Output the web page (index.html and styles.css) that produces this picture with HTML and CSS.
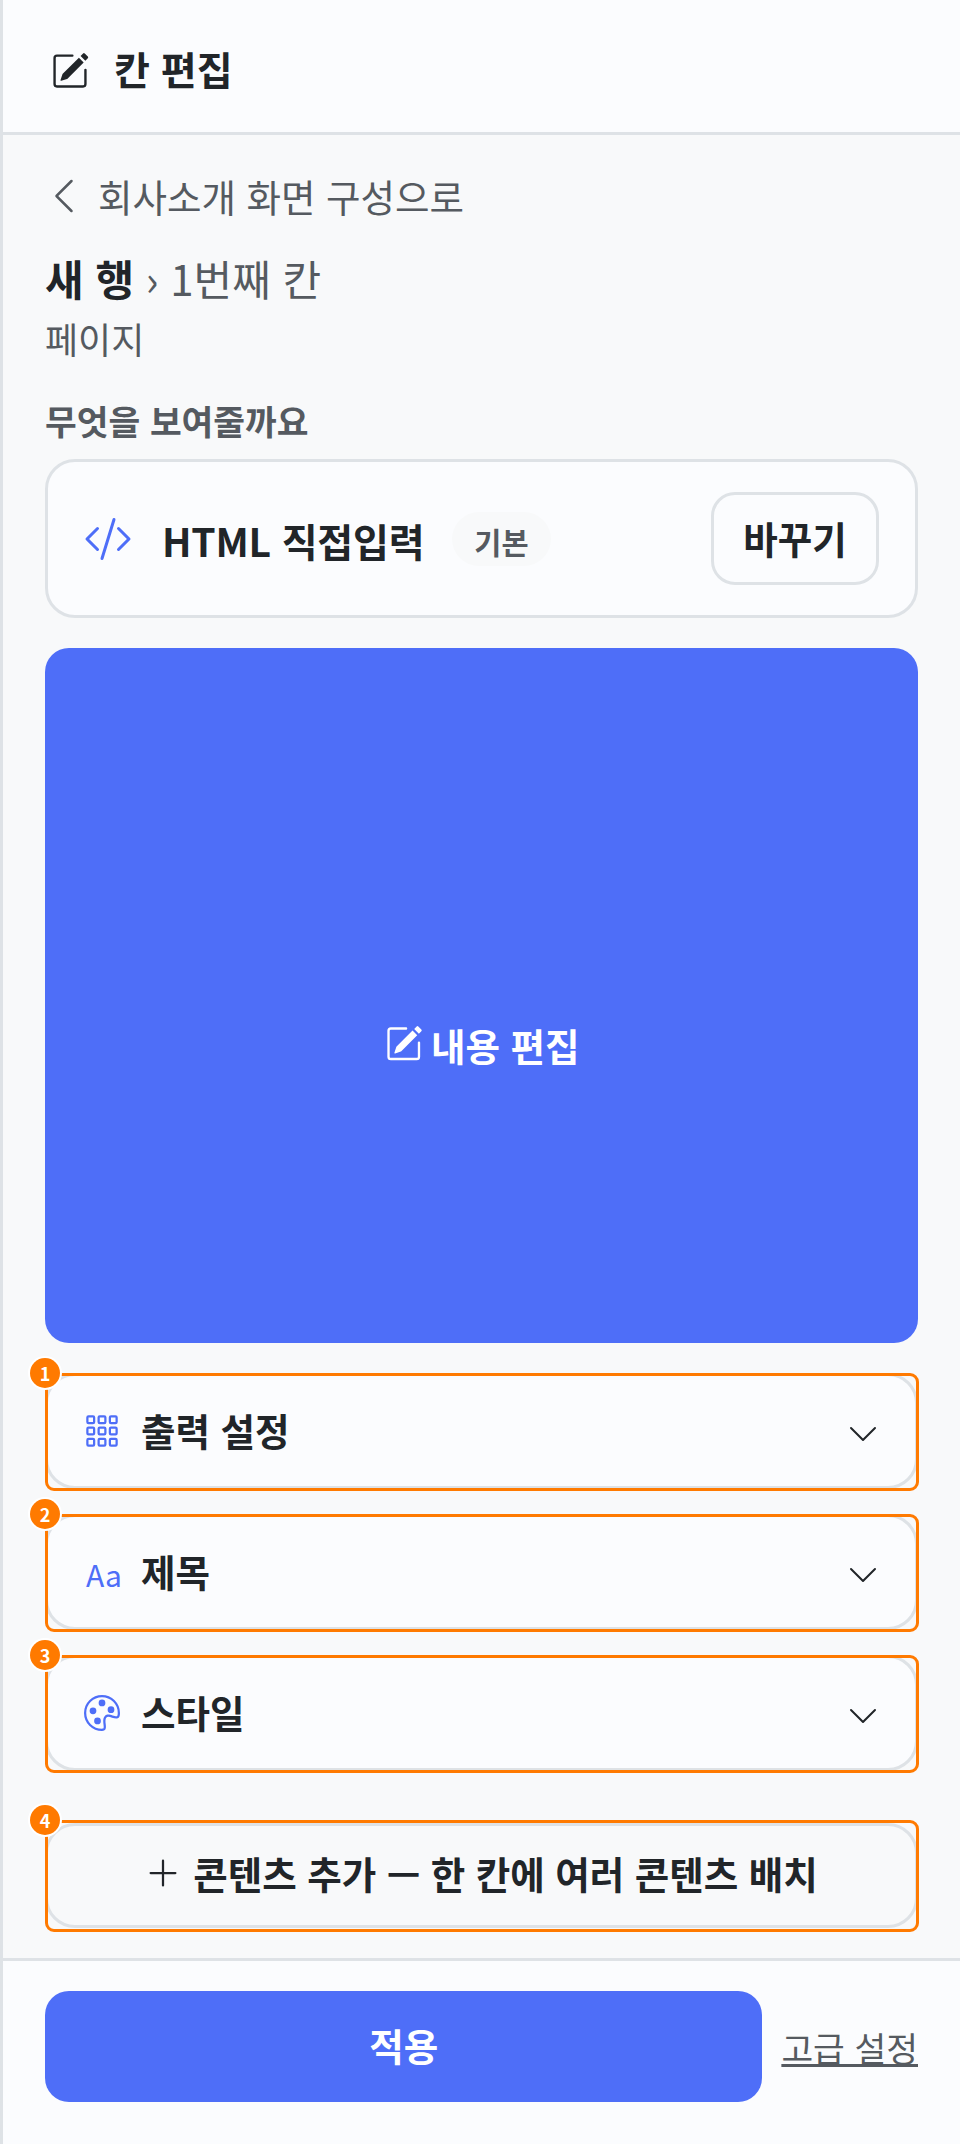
FILE: index.html
```html
<!DOCTYPE html>
<html lang="ko">
<head>
    <meta charset="UTF-8">
    <meta name="viewport" content="width=device-width, initial-scale=1.0">
    <title>칸 편집</title>
    <link rel="stylesheet" href="styles.css">
</head>
<body>
    <div class="panel">
        <header class="panel-header">
            <svg class="icon-header" viewBox="0 0 16 16" fill="currentColor">
                <path d="M15.502 1.94a.5.5 0 0 1 0 .706L14.459 3.69l-2-2L13.502.646a.5.5 0 0 1 .707 0l1.293 1.293zm-1.75 2.456-2-2L4.939 9.21a.5.5 0 0 0-.121.196l-.805 2.414a.25.25 0 0 0 .316.316l2.414-.805a.5.5 0 0 0 .196-.12l6.813-6.814z"/>
                <path fill-rule="evenodd" d="M1 13.5A1.5 1.5 0 0 0 2.5 15h11a1.5 1.5 0 0 0 1.5-1.5v-6a.5.5 0 0 0-1 0v6a.5.5 0 0 1-.5.5h-11a.5.5 0 0 1-.5-.5v-11a.5.5 0 0 1 .5-.5H9a.5.5 0 0 0 0-1H2.5A1.5 1.5 0 0 0 1 2.5v11z"/>
            </svg>
            <h1>칸 편집</h1>
        </header>

        <main class="panel-body">
            <a class="back-link">
                <svg class="icon-back" viewBox="0 0 16 16" fill="currentColor">
                    <path fill-rule="evenodd" d="M11.354 1.646a.5.5 0 0 1 0 .708L5.707 8l5.647 5.646a.5.5 0 0 1-.708.708l-6-6a.5.5 0 0 1 0-.708l6-6a.5.5 0 0 1 .708 0z"/>
                </svg>
                회사소개 화면 구성으로
            </a>
            <div class="crumb"><strong>새 행</strong> <span class="crumb-sep">›</span> 1번째 칸</div>
            <div class="crumb-sub">페이지</div>

            <div class="field-label">무엇을 보여줄까요</div>
            <div class="type-card">
                <svg class="icon-code" viewBox="0 0 16 16" fill="currentColor">
                    <path d="M10.478 1.647a.5.5 0 1 0-.956-.294l-4 13a.5.5 0 0 0 .956.294l4-13zM4.854 4.146a.5.5 0 0 1 0 .708L1.707 8l3.147 3.146a.5.5 0 0 1-.708.708l-3.5-3.5a.5.5 0 0 1 0-.708l3.5-3.5a.5.5 0 0 1 .708 0zm6.292 0a.5.5 0 0 0 0 .708L14.293 8l-3.147 3.146a.5.5 0 0 0 .708.708l3.5-3.5a.5.5 0 0 0 0-.708l-3.5-3.5a.5.5 0 0 0-.708 0z"/>
                </svg>
                <span class="type-name">HTML 직접입력</span>
                <span class="type-badge">기본</span>
                <button class="change-btn">바꾸기</button>
            </div>

            <button class="edit-btn">
                <svg class="icon-edit" viewBox="0 0 16 16" fill="currentColor">
                    <path d="M15.502 1.94a.5.5 0 0 1 0 .706L14.459 3.69l-2-2L13.502.646a.5.5 0 0 1 .707 0l1.293 1.293zm-1.75 2.456-2-2L4.939 9.21a.5.5 0 0 0-.121.196l-.805 2.414a.25.25 0 0 0 .316.316l2.414-.805a.5.5 0 0 0 .196-.12l6.813-6.814z"/>
                    <path fill-rule="evenodd" d="M1 13.5A1.5 1.5 0 0 0 2.5 15h11a1.5 1.5 0 0 0 1.5-1.5v-6a.5.5 0 0 0-1 0v6a.5.5 0 0 1-.5.5h-11a.5.5 0 0 1-.5-.5v-11a.5.5 0 0 1 .5-.5H9a.5.5 0 0 0 0-1H2.5A1.5 1.5 0 0 0 1 2.5v11z"/>
                </svg>
                내용 편집
            </button>

            <div class="section-list">
                <div class="section-row">
                    <span class="mark">1</span>
                    <span class="section-icon">
                        <svg viewBox="0 0 16 16" fill="currentColor">
                            <path d="M4 2v2H2V2h2zm1 12v-2a1 1 0 0 0-1-1H2a1 1 0 0 0-1 1v2a1 1 0 0 0 1 1h2a1 1 0 0 0 1-1zm0-5V7a1 1 0 0 0-1-1H2a1 1 0 0 0-1 1v2a1 1 0 0 0 1 1h2a1 1 0 0 0 1-1zm0-5V2a1 1 0 0 0-1-1H2a1 1 0 0 0-1 1v2a1 1 0 0 0 1 1h2a1 1 0 0 0 1-1zm5 10v-2a1 1 0 0 0-1-1H7a1 1 0 0 0-1 1v2a1 1 0 0 0 1 1h2a1 1 0 0 0 1-1zm0-5V7a1 1 0 0 0-1-1H7a1 1 0 0 0-1 1v2a1 1 0 0 0 1 1h2a1 1 0 0 0 1-1zm0-5V2a1 1 0 0 0-1-1H7a1 1 0 0 0-1 1v2a1 1 0 0 0 1 1h2a1 1 0 0 0 1-1zM9 2v2H7V2h2zm5 0v2h-2V2h2zM4 7v2H2V7h2zm5 0v2H7V7h2zm5 0h-2v2h2V7zM4 12v2H2v-2h2zm5 0v2H7v-2h2zm5 0v2h-2v-2h2zM12 1a1 1 0 0 0-1 1v2a1 1 0 0 0 1 1h2a1 1 0 0 0 1-1V2a1 1 0 0 0-1-1h-2zm-1 6a1 1 0 0 1 1-1h2a1 1 0 0 1 1 1v2a1 1 0 0 1-1 1h-2a1 1 0 0 1-1-1V7zm1 4a1 1 0 0 0-1 1v2a1 1 0 0 0 1 1h2a1 1 0 0 0 1-1v-2a1 1 0 0 0-1-1h-2z"/>
                        </svg>
                    </span>
                    <span class="section-name">출력 설정</span>
                    <svg class="icon-chevron" viewBox="0 0 16 16" fill="currentColor">
                        <path fill-rule="evenodd" d="M1.646 4.646a.5.5 0 0 1 .708 0L8 10.293l5.646-5.647a.5.5 0 0 1 .708.708l-6 6a.5.5 0 0 1-.708 0l-6-6a.5.5 0 0 1 0-.708z"/>
                    </svg>
                </div>
                <div class="section-row">
                    <span class="mark">2</span>
                    <span class="section-icon section-icon-text">Aa</span>
                    <span class="section-name">제목</span>
                    <svg class="icon-chevron" viewBox="0 0 16 16" fill="currentColor">
                        <path fill-rule="evenodd" d="M1.646 4.646a.5.5 0 0 1 .708 0L8 10.293l5.646-5.647a.5.5 0 0 1 .708.708l-6 6a.5.5 0 0 1-.708 0l-6-6a.5.5 0 0 1 0-.708z"/>
                    </svg>
                </div>
                <div class="section-row">
                    <span class="mark">3</span>
                    <span class="section-icon">
                        <svg viewBox="0 0 16 16" fill="currentColor">
                            <path d="M8 5a1.5 1.5 0 1 0 0-3 1.5 1.5 0 0 0 0 3zm4 3a1.5 1.5 0 1 0 0-3 1.5 1.5 0 0 0 0 3zM5.5 7a1.5 1.5 0 1 1-3 0 1.5 1.5 0 0 1 3 0zm.5 6a1.5 1.5 0 1 0 0-3 1.5 1.5 0 0 0 0 3z"/>
                            <path d="M16 8c0 3.15-1.866 2.585-3.567 2.07C11.42 9.763 10.465 9.473 10 10c-.603.683-.475 1.819-.351 2.92C9.826 14.495 9.996 16 8 16a8 8 0 1 1 8-8zm-8 7c.611 0 .654-.171.655-.176.078-.146.124-.464.07-1.119-.014-.168-.037-.37-.061-.591-.052-.464-.112-1.005-.118-1.462-.01-.707.083-1.61.704-2.314.369-.417.845-.578 1.272-.618.404-.038.812.026 1.16.104.343.077.702.186 1.025.284l.028.008c.346.105.658.199.953.266.653.148.904.083.991.024C14.717 9.38 15 9.161 15 8a7 7 0 1 0-7 7z"/>
                        </svg>
                    </span>
                    <span class="section-name">스타일</span>
                    <svg class="icon-chevron" viewBox="0 0 16 16" fill="currentColor">
                        <path fill-rule="evenodd" d="M1.646 4.646a.5.5 0 0 1 .708 0L8 10.293l5.646-5.647a.5.5 0 0 1 .708.708l-6 6a.5.5 0 0 1-.708 0l-6-6a.5.5 0 0 1 0-.708z"/>
                    </svg>
                </div>
            </div>

            <div class="add-row">
                <span class="mark">4</span>
                <svg class="icon-plus" viewBox="0 0 16 16" fill="currentColor">
                    <path fill-rule="evenodd" d="M8 2a.5.5 0 0 1 .5.5v5h5a.5.5 0 0 1 0 1h-5v5a.5.5 0 0 1-1 0v-5h-5a.5.5 0 0 1 0-1h5v-5A.5.5 0 0 1 8 2Z"/>
                </svg>
                콘텐츠 추가 — 한 칸에 여러 콘텐츠 배치
            </div>
        </main>

        <footer class="panel-footer">
            <button class="apply-btn">적용</button>
            <a class="advanced-link">고급 설정</a>
        </footer>
    </div>
</body>
</html>
```

FILE: styles.css
```css
* {
    box-sizing: border-box;
    margin: 0;
    padding: 0;
    font-family: "Noto Sans CJK KR", "Noto Sans", sans-serif;
}
body {
    background: #f8f9fa;
    color: #212529;
}
button {
    border: none;
    cursor: pointer;
}
svg {
    display: block;
    flex-shrink: 0;
}
.panel {
    display: flex;
    flex-direction: column;
    height: 2144px;
    border-left: 3px solid #dee2e6;
}

/* header */
.panel-header {
    display: flex;
    align-items: center;
    gap: 25px;
    height: 135px;
    padding: 8px 0 0 48px;
    background: #fbfcfe;
    border-bottom: 3px solid #dee2e6;
}
.panel-header h1 {
    margin-top: -3px;
    font-size: 39px;
    font-weight: 700;
    line-height: 1.2;
}
.icon-header {
    width: 38px;
    height: 38px;
    margin-top: 1px;
}

/* body */
.panel-body {
    flex: 1;
    padding: 0 42px;
}
.back-link {
    display: flex;
    align-items: center;
    gap: 14px;
    height: 54px;
    margin-top: 34px;
    font-size: 37.5px;
    line-height: 54px;
    color: #555a60;
}
.icon-back {
    width: 40px;
    height: 40px;
    margin-left: -1px;
}
.crumb {
    margin-top: 26px;
    font-size: 42px;
    line-height: 58px;
    color: #555a60;
}
.crumb strong {
    font-weight: 700;
    color: #212529;
}
.crumb-sub {
    font-size: 36px;
    line-height: 48px;
    margin-top: 7px;
    color: #555a60;
}
.field-label {
    margin-top: 34px;
    font-size: 34.5px;
    font-weight: 700;
    line-height: 48px;
    color: #555a60;
}
.type-card {
    display: flex;
    align-items: center;
    height: 159px;
    margin-top: 15px;
    padding: 0 36px;
    background: #fbfcfe;
    border: 3px solid #dee2e6;
    border-radius: 30px;
}
.icon-code {
    width: 48px;
    height: 48px;
    color: #4e6ef8;
}
.type-name {
    margin-top: 2px;
    margin-left: 30px;
    font-size: 39px;
    font-weight: 700;
    line-height: 54px;
    letter-spacing: -0.2px;
}
.type-badge {
    margin-left: 28px;
    padding: 2px 22px 0;
    height: 54px;
    background: #f8f9fa;
    border-radius: 27px;
    font-size: 29.5px;
    font-weight: 700;
    line-height: 54px;
    color: #555a60;
}
.change-btn {
    margin-left: auto;
    width: 168px;
    height: 93px;
    padding-bottom: 2px;
    background: #fbfcfe;
    border: 3px solid #dee2e6;
    border-radius: 24px;
    font-size: 37.5px;
    font-weight: 700;
    color: #212529;
}
.edit-btn {
    display: flex;
    align-items: center;
    justify-content: center;
    gap: 9px;
    width: 100%;
    height: 695px;
    margin-top: 30px;
    padding-top: 97px;
    padding-left: 1px;
    background: #4e6ef8;
    border-radius: 24px;
    font-size: 37.5px;
    font-weight: 700;
    color: #fff;
}
.icon-edit {
    width: 37.5px;
    height: 37.5px;
}

/* accordion rows */
.section-list {
    display: flex;
    flex-direction: column;
    gap: 25px;
    margin-top: 30px;
}
.section-row {
    position: relative;
    display: flex;
    align-items: center;
    height: 116px;
    padding: 0 36px;
    background: #fbfcfe;
    border: 3px solid #dee2e6;
    border-radius: 30px;
}
.section-row::after,
.add-row::after {
    content: "";
    position: absolute;
    left: -3px;
    right: -4px;
    top: -3px;
    bottom: -5px;
    border: 3px solid #ff7a00;
    border-radius: 9px;
}
.section-icon {
    width: 36px;
    margin-right: 21px;
    color: #4e6ef8;
}
.section-icon svg {
    width: 36px;
    height: 36px;
}
.section-icon-text {
    margin-top: 3px;
    padding-left: 2px;
    font-size: 30px;
    line-height: 36px;
}
.section-name {
    margin-bottom: 2px;
    font-size: 37.5px;
    font-weight: 700;
    line-height: 54px;
}
.icon-chevron {
    width: 32px;
    height: 32px;
    margin-left: auto;
    margin-top: 6px;
}
.mark {
    position: absolute;
    left: -18px;
    top: -18px;
    z-index: 1;
    width: 30px;
    height: 30px;
    background: #ff7a00;
    border-radius: 50%;
    box-shadow: 0 0 0 2px #fff;
    text-align: center;
    font-size: 18px;
    font-weight: 700;
    line-height: 30px;
    color: #fff;
}
.add-row {
    position: relative;
    display: flex;
    align-items: center;
    justify-content: center;
    gap: 12px;
    height: 105px;
    margin-top: 52px;
    padding-bottom: 6px;
    background: #f8f9fa;
    border: 3px solid #dee2e6;
    border-radius: 30px;
    font-size: 37.5px;
    font-weight: 700;
}
.add-row::after {
    top: -6px;
    bottom: -7px;
}
.add-row .mark {
    top: -21px;
}
.icon-plus {
    width: 36px;
    height: 36px;
}

/* footer */
.panel-footer {
    display: flex;
    align-items: center;
    gap: 19px;
    height: 186px;
    padding: 30px 42px 42px;
    background: #fbfcfe;
    border-top: 3px solid #dee2e6;
}
.apply-btn {
    flex: 1;
    height: 111px;
    padding-bottom: 5px;
    background: #4e6ef8;
    border-radius: 24px;
    font-size: 37.5px;
    font-weight: 700;
    color: #fff;
}
.advanced-link {
    font-size: 34.5px;
    color: #555a60;
    text-decoration: underline;
}
```
